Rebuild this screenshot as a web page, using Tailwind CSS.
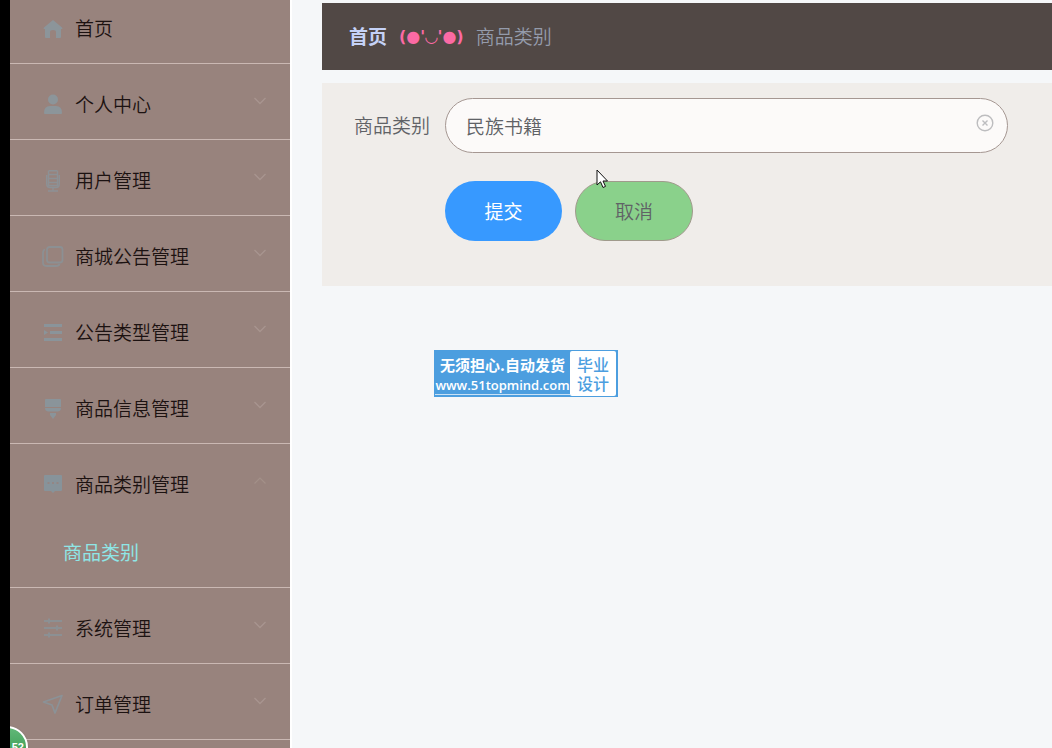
<!DOCTYPE html>
<html lang="zh-CN">
<head>
    <meta charset="UTF-8">
    <meta name="viewport" content="width=device-width, initial-scale=1.0">
    <title>商品类别</title>
    <script src="https://cdn.jsdelivr.net/npm/@tailwindcss/browser@4"></script>
</head>
<body class="relative flex h-screen overflow-hidden bg-[#f5f7f9] font-['Noto_Sans_CJK_SC',sans-serif] text-[19px] font-[350]">

    <!-- Sidebar -->
    <aside class="relative w-[292px] shrink-0 overflow-hidden border-l-10 border-r-2 border-l-black border-r-white bg-[#98837d]">
        <nav>
            <ul class="text-[#1c1211]">
                <li class="border-b border-[#cab8b3]">
                    <a href="#" class="flex h-[63px] items-center gap-[11px] pl-8 pb-1.5">
                        <svg class="size-[22px] text-[#8c959a]" viewBox="0 0 22 22" fill="currentColor"><path d="M11 2 L20 9.500 Q21 10.500 20 11 L19 11 V19 Q19 20 18 20 H14 V14 Q14 12 11 12 Q8 12 8 14 V20 H4 Q3 20 3 19 V11 H2 Q1 10.500 2 9.500 Z"/></svg>
                        <span>首页</span>
                    </a>
                </li>
                <li class="border-b border-[#cab8b3]">
                    <button type="button" class="flex h-[75px] w-full items-center gap-[11px] pl-8 pr-6 pt-1.5">
                        <svg class="size-[22px] text-[#8c959a]" viewBox="0 0 22 22" fill="currentColor"><circle cx="11" cy="5.500" r="5"/><path d="M2 19 Q2 12 8 12 H14 Q20 12 20 19 Q20 20 19 20 H3 Q2 20 2 19 Z"/></svg>
                        <span>个人中心</span>
                        <svg class="ml-auto mb-2 h-2 w-3" viewBox="0 0 12 8" fill="none" stroke="#a8958f" stroke-width="1.300"><path d="M0.500 1 L6 6.500 L11.500 1"/></svg>
                    </button>
                </li>
                <li class="border-b border-[#cab8b3]">
                    <button type="button" class="flex h-[75px] w-full items-center gap-[11px] pl-8 pr-6 pt-1.5">
                        <svg class="size-[22px] text-[#8d9195]" viewBox="0 0 22 22" fill="none" stroke="currentColor" stroke-width="1.400"><path d="M7 0.700H15M7 4.500H15M7 8.500H15M7 12.500H15M6.500 0.500V15.500H15.500V0.500M4.700 5V14Q4.700 17.500 8 17.500H14Q17.300 17.500 17.300 14V5M11 17.500V21M6 21H16"/></svg>
                        <span>用户管理</span>
                        <svg class="ml-auto mb-2 h-2 w-3" viewBox="0 0 12 8" fill="none" stroke="#a8958f" stroke-width="1.300"><path d="M0.500 1 L6 6.500 L11.500 1"/></svg>
                    </button>
                </li>
                <li class="border-b border-[#cab8b3]">
                    <button type="button" class="flex h-[75px] w-full items-center gap-[11px] pl-8 pr-6 pt-1.5">
                        <svg class="size-[22px] text-[#8c9093]" viewBox="0 0 22 22" fill="none" stroke="currentColor" stroke-width="1.800"><rect x="5" y="1" width="15.500" height="15.500" rx="2.500"/><path d="M3 3.500Q1 4 1 7V16.500Q1 20 4.500 20H14Q17 20 17.500 18"/></svg>
                        <span>商城公告管理</span>
                        <svg class="ml-auto mb-2 h-2 w-3" viewBox="0 0 12 8" fill="none" stroke="#a8958f" stroke-width="1.300"><path d="M0.500 1 L6 6.500 L11.500 1"/></svg>
                    </button>
                </li>
                <li class="border-b border-[#cab8b3]">
                    <button type="button" class="flex h-[75px] w-full items-center gap-[11px] pl-8 pr-6 pt-1.5">
                        <svg class="size-[22px] text-[#8a949a]" viewBox="0 0 22 22" fill="none" stroke="currentColor" stroke-width="3"><path d="M2 3.500H20M8 10.500H20M2 17.500H20"/><path d="M2 8L6 10.500L2 13Z" fill="currentColor" stroke="none"/></svg>
                        <span>公告类型管理</span>
                        <svg class="ml-auto mb-2 h-2 w-3" viewBox="0 0 12 8" fill="none" stroke="#a8958f" stroke-width="1.300"><path d="M0.500 1 L6 6.500 L11.500 1"/></svg>
                    </button>
                </li>
                <li class="border-b border-[#cab8b3]">
                    <button type="button" class="flex h-[75px] w-full items-center gap-[11px] pl-8 pr-6 pt-1.5">
                        <svg class="size-[22px] text-[#8a949a]" viewBox="0 0 22 22" fill="currentColor"><path d="M4 1H18Q19 1 19 2V9H3V2Q3 1 4 1ZM3 10H19Q19 13 16 13.500H6Q3 13 3 10ZM8 15H14V17L11 21L8 17Z"/></svg>
                        <span>商品信息管理</span>
                        <svg class="ml-auto mb-2 h-2 w-3" viewBox="0 0 12 8" fill="none" stroke="#a8958f" stroke-width="1.300"><path d="M0.500 1 L6 6.500 L11.500 1"/></svg>
                    </button>
                </li>
                <li class="border-b border-[#cab8b3]">
                    <button type="button" class="flex h-[75px] w-full items-center gap-[11px] pl-8 pr-6 pt-1.5">
                        <svg class="size-[22px]" viewBox="0 0 22 22"><path d="M3 1H19Q20 1 20 2V16Q20 17 19 17H13L11 19L9 17H3Q2 17 2 16V2Q2 1 3 1Z" fill="#87939a"/><path d="M5.500 9h2M10 9h2M14.500 9h2" stroke="#98837d" stroke-width="1.600"/></svg>
                        <span>商品类别管理</span>
                        <svg class="ml-auto mb-2 h-2 w-3" viewBox="0 0 12 8" fill="none" stroke="#a39089" stroke-width="1.200"><path d="M0.500 6.500 L6 1 L11.500 6.500"/></svg>
                    </button>
                    <ul>
                        <li><a href="#" class="flex h-[68px] items-center pb-0.5 pl-[53px] font-normal text-[#8ee6e6]">商品类别</a></li>
                    </ul>
                </li>
                <li class="border-b border-[#cab8b3]">
                    <button type="button" class="flex h-[75px] w-full items-center gap-[11px] pl-8 pr-6 pt-1.5">
                        <svg class="size-[22px] text-[#8c9093]" viewBox="0 0 22 22" fill="none" stroke="currentColor" stroke-width="2"><path d="M2 3H20M2 10H20M2 17H20M7 0.500V5.500M15 7.500V12.500M7 14.500V19.500"/></svg>
                        <span>系统管理</span>
                        <svg class="ml-auto mb-2 h-2 w-3" viewBox="0 0 12 8" fill="none" stroke="#a8958f" stroke-width="1.300"><path d="M0.500 1 L6 6.500 L11.500 1"/></svg>
                    </button>
                </li>
                <li class="border-b border-[#cab8b3]">
                    <button type="button" class="flex h-[75px] w-full items-center gap-[11px] pl-8 pr-6 pt-1.5">
                        <svg class="size-[22px] text-[#8b9297]" viewBox="0 0 22 22" fill="none" stroke="currentColor" stroke-width="1.700" stroke-linejoin="round"><path d="M20 1.500L1.500 8L10 11L13 19Z"/></svg>
                        <span>订单管理</span>
                        <svg class="ml-auto mb-2 h-2 w-3" viewBox="0 0 12 8" fill="none" stroke="#a8958f" stroke-width="1.300"><path d="M0.500 1 L6 6.500 L11.500 1"/></svg>
                    </button>
                </li>
            </ul>
        </nav>
        <!-- Counter bubble -->
        <div class="absolute -left-6 top-[726px] flex size-[42px] items-center justify-end rounded-full border-2 border-white bg-linear-to-b from-[#62b878] to-[#259347] pr-0.5 font-['Liberation_Sans',sans-serif] text-[11px] font-bold text-white shadow">52</div>
    </aside>

    <!-- Content -->
    <main class="min-w-0 flex-1 pl-[30px] pt-[3px]">
        <nav class="flex h-[67px] items-center bg-[#514845] pl-[27px]">
            <a href="#" class="font-bold text-[#c5d2f7]">首页</a>
            <span class="mx-3 whitespace-nowrap font-['DejaVu_Sans',sans-serif] text-[16px] font-bold text-[#fb6aa4]">(●'◡'●)</span>
            <span class="text-[#949bab]">商品类别</span>
        </nav>

        <form class="mt-[13px] bg-[#f0edea] pb-[45px] pl-8 pr-11 pt-[15px] text-[#606266]">
            <div class="flex items-center">
                <label for="category" class="w-[91px] shrink-0">商品类别</label>
                <div class="relative flex-1">
                    <input id="category" type="text" value="民族书籍" class="h-[55px] w-full rounded-full border border-[#a59792] bg-[#fcfaf9] px-5 outline-none">
                    <button type="button" aria-label="清空" class="absolute right-[14px] top-4">
                        <svg class="size-[18px]" viewBox="0 0 18 18" fill="none" stroke="#bdbdbf" stroke-width="1.400"><circle cx="9" cy="9" r="7.800"/><path d="M6.500 6.500L11.500 11.500M11.500 6.500L6.500 11.500"/></svg>
                    </button>
                </div>
            </div>
            <div class="mt-7 flex gap-[13px] pl-[91px]">
                <button type="submit" class="h-[60px] w-[117px] rounded-full bg-[#3799ff] font-normal text-white">提交</button>
                <button type="button" class="h-[60px] w-[118px] rounded-full border border-[#a09a8c] bg-[#8ad18b]">取消</button>
            </div>
        </form>
    </main>

    <!-- Watermark -->
    <div class="absolute left-[434px] top-[350px] flex h-[47px] w-[184px] bg-[#4c9edf] p-px pr-0.5">
        <div class="flex w-[135px] flex-col items-center justify-center whitespace-nowrap text-white">
            <span class="text-[15px] leading-[23px] font-bold">无须担心.自动发货</span>
            <a href="#" class="border-b border-white/70 font-['Open_Sans',sans-serif] text-[13px] leading-[18px] font-semibold">www.51topmind.com</a>
        </div>
        <div class="flex flex-1 flex-col items-center justify-center rounded-xs bg-white text-[16px] leading-[19px] font-medium text-[#4c9edf]">
            <span>毕业</span>
            <span>设计</span>
        </div>
    </div>

    <!-- Mouse pointer -->
    <svg class="absolute left-[596px] top-[169px] h-[20px] w-[13px]" viewBox="0 0 13 20"><path d="M1 1V16L4.500 12.800L7 18.500L9.500 17.400L7 12H11.500Z" fill="#fff" stroke="#111" stroke-width="1"/></svg>

</body>
</html>
